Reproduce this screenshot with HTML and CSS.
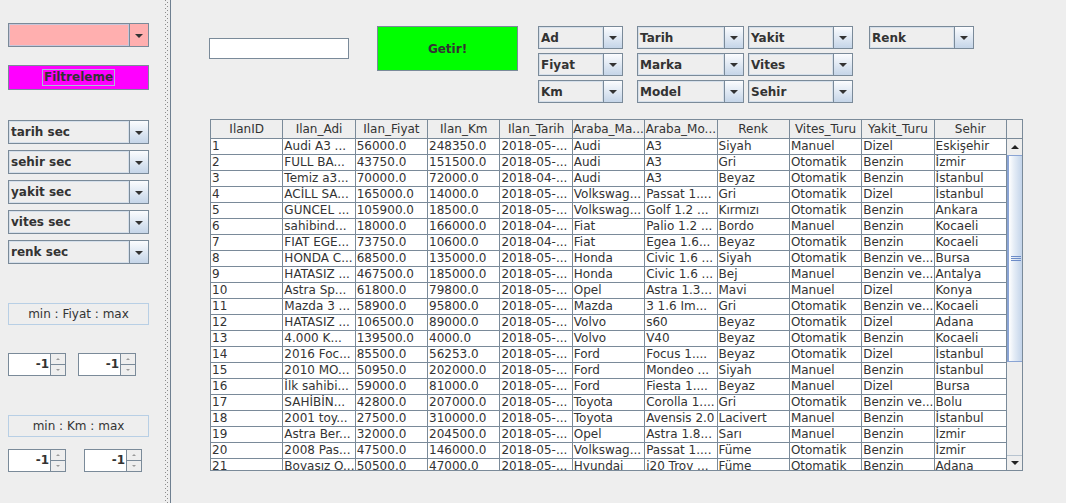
FILE: index.html
```html
<!DOCTYPE html>
<html>
<head>
<meta charset="utf-8">
<link rel="stylesheet" href="styles.css">
</head>
<body>
<div class="app">
  <div class="left">
    <div class="combo pink"><div class="val"></div><div class="btn"><i class="arr"></i></div></div>
    <div class="fbtn"><span class="focus">Filtreleme</span></div>
    <div class="combos">
      <div class="combo"><div class="val">tarih sec</div><div class="btn"><i class="arr"></i></div></div>
      <div class="combo"><div class="val">sehir sec</div><div class="btn"><i class="arr"></i></div></div>
      <div class="combo"><div class="val">yakit sec</div><div class="btn"><i class="arr"></i></div></div>
      <div class="combo"><div class="val">vites sec</div><div class="btn"><i class="arr"></i></div></div>
      <div class="combo"><div class="val">renk sec</div><div class="btn"><i class="arr"></i></div></div>
    </div>
    <div class="lbl">min : Fiyat : max</div>
    <div class="spinrow r1">
      <div class="spin"><div class="fld">-1</div><div class="sb"><div><i class="sup"></i></div><div><i class="sdn"></i></div></div></div>
      <div class="spin second"><div class="fld">-1</div><div class="sb"><div><i class="sup"></i></div><div><i class="sdn"></i></div></div></div>
    </div>
    <div class="lbl km">min : Km : max</div>
    <div class="spinrow r2">
      <div class="spin"><div class="fld">-1</div><div class="sb"><div><i class="sup"></i></div><div><i class="sdn"></i></div></div></div>
      <div class="spin second"><div class="fld">-1</div><div class="sb"><div><i class="sup"></i></div><div><i class="sdn"></i></div></div></div>
    </div>
  </div>
  <div class="divider"></div>
  <div class="right">
    <div class="top">
      <div class="tf"></div>
      <div class="getir">Getir!</div>
      <div class="col c1">
        <div class="combo"><div class="val">Ad</div><div class="btn"><i class="arr"></i></div></div>
        <div class="combo"><div class="val">Fiyat</div><div class="btn"><i class="arr"></i></div></div>
        <div class="combo"><div class="val">Km</div><div class="btn"><i class="arr"></i></div></div>
      </div>
      <div class="col c2">
        <div class="combo"><div class="val">Tarih</div><div class="btn"><i class="arr"></i></div></div>
        <div class="combo"><div class="val">Marka</div><div class="btn"><i class="arr"></i></div></div>
        <div class="combo"><div class="val">Model</div><div class="btn"><i class="arr"></i></div></div>
      </div>
      <div class="col c3">
        <div class="combo"><div class="val">Yakit</div><div class="btn"><i class="arr"></i></div></div>
        <div class="combo"><div class="val">Vites</div><div class="btn"><i class="arr"></i></div></div>
        <div class="combo"><div class="val">Sehir</div><div class="btn"><i class="arr"></i></div></div>
      </div>
      <div class="col c4">
        <div class="combo"><div class="val">Renk</div><div class="btn"><i class="arr"></i></div></div>
      </div>
    </div>
    <div class="scroll">
      <div class="viewport">
        <table>
          <thead>
            <tr><th>IlanID</th><th>Ilan_Adi</th><th>Ilan_Fiyat</th><th>Ilan_Km</th><th>Ilan_Tarih</th><th>Araba_Ma...</th><th>Araba_Mo...</th><th>Renk</th><th>Vites_Turu</th><th>Yakit_Turu</th><th>Sehir</th></tr>
          </thead>
          <tbody>
            <tr><td>1</td><td>Audi A3 ...</td><td>56000.0</td><td>248350.0</td><td>2018-05-...</td><td>Audi</td><td>A3</td><td>Siyah</td><td>Manuel</td><td>Dizel</td><td>Eskişehir</td></tr>
            <tr><td>2</td><td>FULL BA...</td><td>43750.0</td><td>151500.0</td><td>2018-05-...</td><td>Audi</td><td>A3</td><td>Gri</td><td>Otomatik</td><td>Benzin</td><td>İzmir</td></tr>
            <tr><td>3</td><td>Temiz a3...</td><td>70000.0</td><td>72000.0</td><td>2018-04-...</td><td>Audi</td><td>A3</td><td>Beyaz</td><td>Otomatik</td><td>Benzin</td><td>İstanbul</td></tr>
            <tr><td>4</td><td>ACİLL SA...</td><td>165000.0</td><td>14000.0</td><td>2018-05-...</td><td>Volkswag...</td><td>Passat 1....</td><td>Gri</td><td>Otomatik</td><td>Dizel</td><td>İstanbul</td></tr>
            <tr><td>5</td><td>GÜNCEL ...</td><td>105900.0</td><td>18500.0</td><td>2018-05-...</td><td>Volkswag...</td><td>Golf 1.2 ...</td><td>Kırmızı</td><td>Otomatik</td><td>Benzin</td><td>Ankara</td></tr>
            <tr><td>6</td><td>sahibind...</td><td>18000.0</td><td>166000.0</td><td>2018-04-...</td><td>Fiat</td><td>Palio 1.2 ...</td><td>Bordo</td><td>Manuel</td><td>Benzin</td><td>Kocaeli</td></tr>
            <tr><td>7</td><td>FIAT EGE...</td><td>73750.0</td><td>10600.0</td><td>2018-04-...</td><td>Fiat</td><td>Egea 1.6...</td><td>Beyaz</td><td>Otomatik</td><td>Benzin</td><td>Kocaeli</td></tr>
            <tr><td>8</td><td>HONDA C...</td><td>68500.0</td><td>135000.0</td><td>2018-05-...</td><td>Honda</td><td>Civic 1.6 ...</td><td>Siyah</td><td>Otomatik</td><td>Benzin ve...</td><td>Bursa</td></tr>
            <tr><td>9</td><td>HATASIZ ...</td><td>467500.0</td><td>185000.0</td><td>2018-05-...</td><td>Honda</td><td>Civic 1.6 ...</td><td>Bej</td><td>Manuel</td><td>Benzin ve...</td><td>Antalya</td></tr>
            <tr><td>10</td><td>Astra Sp...</td><td>61800.0</td><td>79800.0</td><td>2018-05-...</td><td>Opel</td><td>Astra 1.3...</td><td>Mavi</td><td>Manuel</td><td>Dizel</td><td>Konya</td></tr>
            <tr><td>11</td><td>Mazda 3 ...</td><td>58900.0</td><td>95800.0</td><td>2018-05-...</td><td>Mazda</td><td>3 1.6 Im...</td><td>Gri</td><td>Otomatik</td><td>Benzin ve...</td><td>Kocaeli</td></tr>
            <tr><td>12</td><td>HATASIZ ...</td><td>106500.0</td><td>89000.0</td><td>2018-05-...</td><td>Volvo</td><td>s60</td><td>Beyaz</td><td>Otomatik</td><td>Dizel</td><td>Adana</td></tr>
            <tr><td>13</td><td>4.000 K...</td><td>139500.0</td><td>4000.0</td><td>2018-05-...</td><td>Volvo</td><td>V40</td><td>Beyaz</td><td>Otomatik</td><td>Benzin</td><td>Kocaeli</td></tr>
            <tr><td>14</td><td>2016 Foc...</td><td>85500.0</td><td>56253.0</td><td>2018-05-...</td><td>Ford</td><td>Focus 1....</td><td>Beyaz</td><td>Otomatik</td><td>Dizel</td><td>İstanbul</td></tr>
            <tr><td>15</td><td>2010 MO...</td><td>50950.0</td><td>202000.0</td><td>2018-05-...</td><td>Ford</td><td>Mondeo ...</td><td>Siyah</td><td>Manuel</td><td>Benzin</td><td>İstanbul</td></tr>
            <tr><td>16</td><td>İlk sahibi...</td><td>59000.0</td><td>81000.0</td><td>2018-05-...</td><td>Ford</td><td>Fiesta 1....</td><td>Beyaz</td><td>Manuel</td><td>Dizel</td><td>Bursa</td></tr>
            <tr><td>17</td><td>SAHİBİN...</td><td>42800.0</td><td>207000.0</td><td>2018-05-...</td><td>Toyota</td><td>Corolla 1....</td><td>Gri</td><td>Otomatik</td><td>Benzin ve...</td><td>Bolu</td></tr>
            <tr><td>18</td><td>2001 toy...</td><td>27500.0</td><td>310000.0</td><td>2018-05-...</td><td>Toyota</td><td>Avensis 2.0</td><td>Lacivert</td><td>Manuel</td><td>Benzin</td><td>İstanbul</td></tr>
            <tr><td>19</td><td>Astra Ber...</td><td>32000.0</td><td>204500.0</td><td>2018-05-...</td><td>Opel</td><td>Astra 1.8...</td><td>Sarı</td><td>Manuel</td><td>Benzin</td><td>İzmir</td></tr>
            <tr><td>20</td><td>2008 Pas...</td><td>47500.0</td><td>146000.0</td><td>2018-05-...</td><td>Volkswag...</td><td>Passat 1....</td><td>Füme</td><td>Otomatik</td><td>Benzin</td><td>İzmir</td></tr>
            <tr><td>21</td><td>Boyasız O...</td><td>50500.0</td><td>47000.0</td><td>2018-05-...</td><td>Hyundai</td><td>i20 Troy ...</td><td>Füme</td><td>Otomatik</td><td>Benzin</td><td>Adana</td></tr>
          </tbody>
        </table>
      </div>
      <div class="vbar">
        <div class="corner"></div>
        <div class="sbtn up"><i class="uarr"></i></div>
        <div class="thumb"><div class="grip"></div></div>
        <div class="track"></div>
        <div class="sbtn down"><i class="darr"></i></div>
      </div>
    </div>
  </div>
</div>
</body>
</html>
```

FILE: styles.css
```css
* { box-sizing: border-box; }
html, body { margin: 0; padding: 0; }
body {
  width: 1066px;
  height: 503px;
  overflow: hidden;
  background: #eeeeee;
  font-family: "DejaVu Sans", "Noto Sans", sans-serif;
  font-size: 12px;
  color: #333333;
}
.app { display: flex; height: 503px; }

/* ---------- left panel ---------- */
.left {
  width: 163px;
  flex: none;
  padding: 23px 0 0 8px;
  display: flex;
  flex-direction: column;
  align-items: flex-start;
}
.combo {
  display: flex;
  width: 141px;
  height: 24px;
  border: 1px solid #7a8a99;
  background: #eeeeee;
  font-weight: bold;
}
.combo .val {
  flex: 1;
  min-width: 0;
  padding-left: 2px;
  display: flex;
  align-items: center;
  white-space: nowrap;
  overflow: hidden;
  box-shadow: inset 0 0 0 1px #d5dfea;
}
.combo .btn {
  width: 19px;
  flex: none;
  border-left: 1px solid #7a8a99;
  background: linear-gradient(#fbfcfe, #c5d5e8);
  display: flex;
  align-items: center;
  justify-content: center;
}
.arr {
  display: block;
  width: 0;
  height: 0;
  border-left: 4px solid transparent;
  border-right: 4px solid transparent;
  border-top: 4px solid #333333;
  margin-top: 1px;
}
.pink, .pink .btn { background: #ffafaf; }
.pink .val { box-shadow: inset 0 0 0 1px #c9c5d8; }

.fbtn {
  margin-top: 18px;
  width: 141px;
  height: 25px;
  background: #ff00ff;
  border: 1px solid #7a8a99;
  display: flex;
  align-items: center;
  justify-content: center;
  font-weight: bold;
}
.focus {
  border: 1px solid #a9bdd2;
  padding: 0 1px;
  line-height: 15px;
}
.combos {
  margin-top: 30px;
  display: flex;
  flex-direction: column;
  gap: 6px;
}
.lbl {
  margin-top: 39px;
  width: 141px;
  height: 22px;
  border: 1px solid #b8cfe5;
  display: flex;
  align-items: center;
  justify-content: center;
}
.spinrow { display: flex; margin-top: 28px; }
.spinrow.r1 .second { margin-left: 12px; }
.spinrow.r2 { margin-top: 12px; }
.spinrow.r2 .second { margin-left: 18px; }
.spin { display: flex; width: 58px; height: 23px; }
.spin .fld {
  width: 42px;
  background: #ffffff;
  border: 1px solid #7a8a99;
  border-right: none;
  text-align: right;
  font-weight: bold;
  padding-right: 1px;
  line-height: 21px;
}
.spin .sb {
  width: 16px;
  display: flex;
  flex-direction: column;
  border: 1px solid #7a8a99;
}
.spin .sb > div {
  flex: 1;
  display: flex;
  align-items: center;
  justify-content: center;
  background: #eeeeee;
}
.spin .sb > div + div { border-top: 1px solid #7a8a99; }
.sup, .sdn { display: block; width: 0; height: 0; border-left: 2px solid transparent; border-right: 2px solid transparent; }
.sup { border-bottom: 2px solid #9a9a9a; }
.sdn { border-top: 2px solid #9a9a9a; }

/* ---------- divider ---------- */
.divider {
  width: 9px;
  flex: none;
  background:
    linear-gradient(#6e7f90, #6e7f90) 7px 0 / 1px 100% no-repeat,
    linear-gradient(#8c8c8c 1px, transparent 1px) 2px 0 / 1px 4px repeat-y,
    linear-gradient(#8c8c8c 1px, transparent 1px) 4px 2px / 1px 4px repeat-y;
}

/* ---------- right panel ---------- */
.right { flex: 1; padding-top: 26px; }
.top { display: flex; align-items: flex-start; height: 77px; }
.tf {
  margin: 12px 0 0 37px;
  width: 140px;
  height: 21px;
  background: #ffffff;
  border: 1px solid #7a8a99;
}
.getir {
  margin-left: 28px;
  width: 141px;
  height: 45px;
  background: #00ff00;
  border: 1px solid #7a8a99;
  display: flex;
  align-items: center;
  justify-content: center;
  font-weight: bold;
}
.col { display: flex; flex-direction: column; gap: 4px; }
.col .combo { width: 100%; height: 23px; }
.c1 { margin-left: 20px; width: 85px; }
.c2 { margin-left: 14px; width: 107px; }
.c3 { margin-left: 4px; width: 105px; }
.c4 { margin-left: 16px; width: 105px; }

/* ---------- table ---------- */
.scroll {
  margin: 16px 0 0 38px;
  width: 813px;
  height: 352px;
  border: 1px solid #7a8a99;
  display: flex;
  background: #ffffff;
}
.viewport { width: 796px; flex: none; overflow: hidden; }
table {
  border-collapse: separate;
  border-spacing: 0;
  table-layout: fixed;
  width: 796px;
}
th {
  height: 19px;
  padding: 0;
  line-height: 18px;
  background: #eeeeee;
  font-weight: normal;
  text-align: center;
  white-space: nowrap;
  overflow: hidden;
  border-right: 1px solid #7a8a99;
  border-bottom: 1px solid #7a8a99;
}
td {
  height: 16px;
  padding: 0 0 0 1px;
  line-height: 15px;
  background: #ffffff;
  white-space: nowrap;
  overflow: hidden;
  border-right: 1px solid #7a8a99;
  border-bottom: 1px solid #7a8a99;
}
.vbar {
  width: 15px;
  flex: none;
  display: flex;
  flex-direction: column;
  background: #eeeeee;
}
.corner { height: 19px; border-bottom: 1px solid #7a8a99; background: #eeeeee; }
.sbtn {
  height: 16px;
  display: flex;
  align-items: center;
  justify-content: center;
  background: #eeeeee;
}
.sbtn.down { height: 15px; border-top: 1px solid #b8c4d0; }
.uarr, .darr { display: block; width: 0; height: 0; border-left: 4px solid transparent; border-right: 4px solid transparent; }
.uarr { border-bottom: 4px solid #222222; }
.darr { border-top: 4px solid #222222; }
.thumb {
  height: 207px;
  border-left: 2px solid #8aa4d4;
  border-top: 1px solid #8aa4d4;
  border-bottom: 1px solid #8aa4d4;
  background: linear-gradient(to right, #ffffff 0%, #e7eef7 35%, #c3d4ea 100%);
  display: flex;
  align-items: center;
  justify-content: center;
}
.grip {
  width: 10px;
  height: 5px;
  background: repeating-linear-gradient(#6d8cc8 0 1px, transparent 1px 2px);
}
.track { flex: 1; background: #eeeeee; }
```
